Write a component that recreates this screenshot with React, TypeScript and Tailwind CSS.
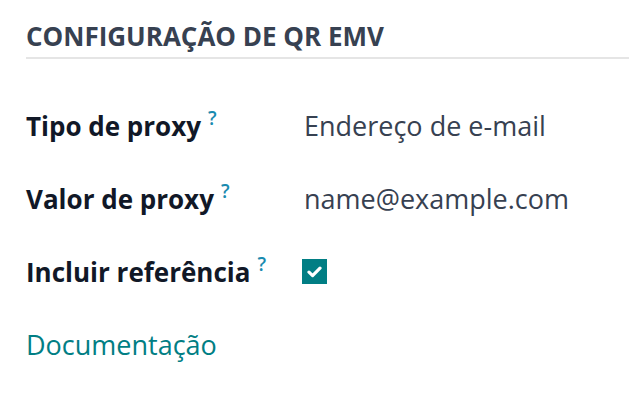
import React from "react";

function Help() {
  return (
    <span className="ml-[7px] text-[19px] font-semibold text-[#1a8bb0] relative top-[-11px]">?</span>
  );
}

function Row({ label, children }: { label: string; children: React.ReactNode }) {
  return (
    <div className="flex items-center h-[73px]">
      <div className="w-[278px] shrink-0 text-[26px] font-bold text-[#111827] leading-none whitespace-nowrap">
        {label}
        <Help />
      </div>
      <div className="text-[27px] text-[#374151] leading-none">{children}</div>
    </div>
  );
}

export default function App() {
  return (
    <div className="w-[629px] h-[403px] bg-white overflow-hidden" style={{ fontFamily: '"Open Sans", "Noto Sans", sans-serif' }}>
      <div className="pl-[26px] pt-[23px]">
        <div className="text-[26px] font-bold text-[#374151] uppercase leading-none">
          Configuração de QR EMV
        </div>
        <div className="mt-[8px] h-[2px] bg-[#e5e5e5]" />
        <div className="mt-[30px]">
          <Row label="Tipo de proxy">Endereço de e-mail</Row>
          <Row label="Valor de proxy">name@example.com</Row>
          <Row label="Incluir referência">
            <div className="w-[25px] h-[25px] bg-[#017e84] flex items-center justify-center ml-[-2px]">
              <svg width="15" height="12" viewBox="0 0 15 12">
                <path d="M2 6.2 L5.6 9.6 L13 2.2" stroke="white" strokeWidth="3.2" fill="none" strokeLinecap="round" strokeLinejoin="round" />
              </svg>
            </div>
          </Row>
          <div className="h-[73px] flex items-center text-[27px] text-[#017e84] leading-none">Documentação</div>
        </div>
      </div>
    </div>
  );
}
